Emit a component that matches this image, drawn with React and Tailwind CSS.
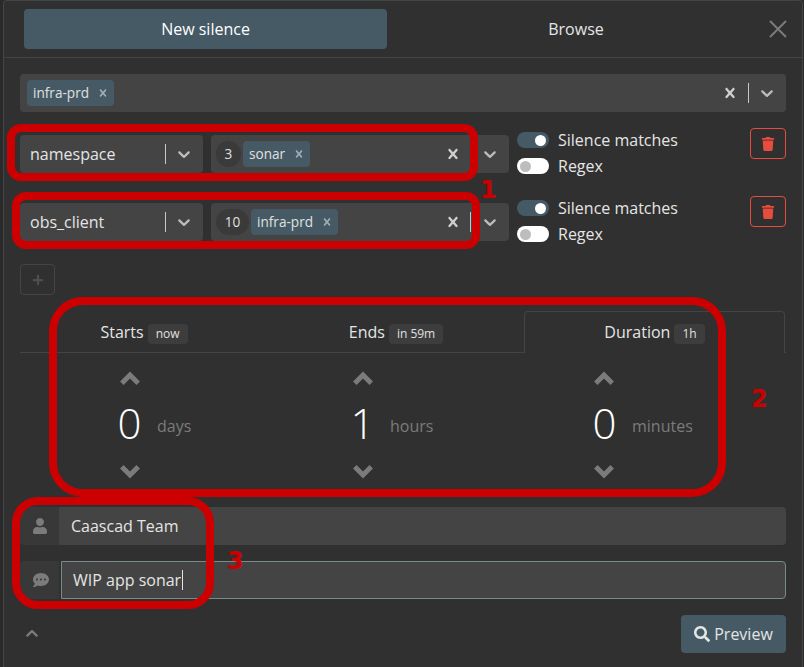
import { FaCommentDots, FaPlus, FaSearch, FaTrash, FaUser } from 'react-icons/fa';

// react-select's own indicator glyphs
const Chevron = ({ className = '' }) => (
  <svg viewBox="0 0 20 20" width="20" height="20" fill="currentColor" className={className}>
    <path d="M4.516 7.548c0.436-0.446 1.043-0.481 1.576 0l3.908 3.747 3.908-3.747c0.533-0.481 1.141-0.446 1.574 0 0.436 0.445 0.408 1.197 0 1.615-0.406 0.418-4.695 4.502-4.695 4.502-0.217 0.223-0.502 0.335-0.787 0.335s-0.57-0.112-0.789-0.335c0 0-4.287-4.084-4.695-4.502s-0.436-1.17 0-1.615z" />
  </svg>
);

const Cross = ({ size = 20, className = '' }) => (
  <svg viewBox="0 0 20 20" width={size} height={size} fill="currentColor" className={className}>
    <path d="M14.348 14.849c-0.469 0.469-1.229 0.469-1.697 0l-2.651-3.030-2.651 3.029c-0.469 0.469-1.229 0.469-1.697 0-0.469-0.469-0.469-1.229 0-1.697l2.758-3.15-2.759-3.152c-0.469-0.469-0.469-1.228 0-1.697s1.228-0.469 1.697 0l2.652 3.031 2.651-3.031c0.469-0.469 1.228-0.469 1.697 0s0.469 1.229 0 1.697l-2.758 3.152 2.758 3.15c0.469 0.469 0.469 1.229 0 1.698z" />
  </svg>
);

// thick spinner arrows, pointing up unless flipped
const SpinArrow = ({ className = '' }) => (
  <svg viewBox="0 0 20 14" width="20" height="14" fill="none" stroke="#7b7b7b" strokeWidth="5" className={className}>
    <polyline points="1.8,12.2 10,4 18.2,12.2" />
  </svg>
);

const Tag = ({ children }) => (
  <div className="flex h-[26px] items-center rounded bg-[#455a64] pl-[6px] pr-[4px] text-[13.6px] text-[#e0e0e0]">
    {children}
    <Cross size={14} className="ml-[7px] text-[#a3adb2]" />
  </div>
);

const Toggle = ({ on, label }) => (
  <div className="flex h-[26px] items-center">
    <div className={`flex h-4 w-8 items-center rounded-full px-[3px] ${on ? 'justify-end bg-[#455a64]' : 'justify-start bg-white'}`}>
      <div className={`h-[11px] w-[11px] rounded-full ${on ? 'bg-white' : 'bg-[#bdbdbd]'}`} />
    </div>
    <span className="ml-[9px] text-[16px] text-[#e5e5e5]">{label}</span>
  </div>
);

const MatcherRow = ({ name, count, value, countWidth, caret }) => (
  <div className="flex items-start">
    <div className="mt-[7px] flex h-[38px] w-[183px] items-center rounded bg-[#444444] pl-[10px] pr-[9px]">
      <span className="flex-1 text-[16px] text-[#e5e5e5]">{name}</span>
      <div className="h-5 w-px bg-[#c8c8c8]" />
      <Chevron className="ml-[8px] text-[#bcbcbc]" />
    </div>
    <div className="ml-2 mt-[7px] flex h-[38px] w-[298px] items-center rounded bg-[#444444] pl-[5px] pr-[9px]">
      <div className={`flex h-[26px] items-center justify-center rounded-full bg-[#3a3a3a] text-[13.6px] text-[#e0e0e0] ${countWidth}`}>{count}</div>
      <div className="ml-[2px]"><Tag>{value}</Tag></div>
      <div className="flex-1" />
      <Cross className="text-[#d0d0d0]" />
      <div className={`ml-[7px] h-5 w-px ${caret ? 'bg-[#c8c8c8]' : ''}`} />
      <Chevron className="ml-[9px] text-[#bcbcbc]" />
    </div>
    <div className="-mt-px ml-2 flex flex-col">
      <Toggle on label="Silence matches" />
      <Toggle label="Regex" />
    </div>
    <div className="flex-1" />
    <div className="flex h-[31px] w-9 items-center justify-center rounded border border-[#e74c3c] text-[#e74c3c]">
      <FaTrash size={14} />
    </div>
  </div>
);

const Spinner = ({ value, unit, arrowClass = '' }) => (
  <div className="flex flex-col">
    <SpinArrow className={arrowClass} />
    <div className="mt-4 flex h-[44px] items-center">
      <span className="flex w-[21px] justify-center text-[42px] font-light leading-none text-white">{value}</span>
      <span className="ml-[17px] mt-[6px] text-[16px] text-[#7b7b7b]">{unit}</span>
    </div>
    <SpinArrow className={`mt-5 rotate-180 ${arrowClass}`} />
  </div>
);

const Badge = ({ children }) => (
  <span className="ml-[4px] mt-1 flex h-5 items-center rounded bg-[#3d3d3d] px-[8px] text-[12px] text-[#e0e0e0]">{children}</span>
);

const TimeTab = ({ label, badge, active, className }) => (
  <div className={`flex h-[42px] items-center justify-center pb-[2px] text-[16px] text-[#e5e5e5] ${active ? 'rounded-t border border-b-0 border-[#444444]' : 'border-b border-[#444444] pr-[4px] pt-[2px]'} ${className}`}>
    {label}
    <Badge>{badge}</Badge>
  </div>
);

const InputRow = ({ icon, children, focused }) => (
  <div className="flex h-[38px]">
    <div className="flex w-[39px] shrink-0 items-center justify-center rounded-l bg-[#383838] text-[#7b7b7b]">{icon}</div>
    <div className={`flex flex-1 items-center rounded-r bg-[#444444] text-[16px] text-[#e5e5e5] ${focused ? 'ml-[2px] border border-[#7b8a8b] pl-[11px]' : 'pl-3'}`}>
      {children}
    </div>
  </div>
);

export default function App() {
  return (
    <div className="relative h-[667px] w-[804px] overflow-hidden bg-[#2a2a2a] font-['Open_Sans',sans-serif]">
      {/* Modal */}
      <div className="ml-[3px] mr-px h-[667px] rounded-t border border-b-0 border-[#444444] bg-[#303030]">
        {/* Tabs */}
        <div className="flex h-[57px] border-b border-[#444444] pl-5 pt-2">
          <div className="flex h-10 w-[363px] items-center justify-center rounded bg-[#455a64] text-[16px] text-white">New silence</div>
          <div className="flex h-10 w-[378px] items-center justify-center text-[16px] text-[#e5e5e5]">Browse</div>
          <svg viewBox="0 0 18 18" width="18" height="18" className="ml-[4px] mt-[11px] text-[#7b7b7b]" stroke="currentColor" strokeWidth="2">
            <path d="M1 1 17 17M17 1 1 17" />
          </svg>
        </div>

        <div className="px-4 pt-4">
          {/* Cluster select */}
          <div className="flex h-[38px] items-center rounded bg-[#444444] pl-[7px] pr-[9px]">
            <Tag>infra-prd</Tag>
            <div className="flex-1" />
            <Cross className="text-[#d0d0d0]" />
            <div className="ml-[8px] h-5 w-px bg-[#c8c8c8]" />
            <Chevron className="ml-[8px] text-[#bcbcbc]" />
          </div>

          {/* Matchers */}
          <div className="mt-4 flex flex-col gap-[17px]">
            <MatcherRow name="namespace" count="3" value="sonar" countWidth="w-[25px]" />
            <MatcherRow name="obs_client" count="10" value="infra-prd" countWidth="w-[33px]" caret />
          </div>

          <div className="mt-[17px] flex h-[31px] w-[35px] items-center justify-center rounded border border-[#444444] text-[#4e4e4e]">
            <FaPlus size={12} />
          </div>

          {/* Schedule tabs */}
          <div className="mt-4 flex">
            <TimeTab label="Starts" badge="now" className="w-[252px]" />
            <TimeTab label="Ends" badge="in 59m" className="w-[252px]" />
            <TimeTab label="Duration" badge="1h" active className="w-[261px]" />
            <div className="w-px border-b border-[#444444]" />
          </div>
          <div className="grid grid-cols-[233px_242px_1fr] pl-[99px] pt-[18px]">
            <Spinner value="0" unit="days" arrowClass="ml-px" />
            <Spinner value="1" unit="hours" arrowClass="ml-px" />
            <Spinner value="0" unit="minutes" />
          </div>

          {/* Author and comment */}
          <div className="mt-7 flex flex-col gap-4">
            <InputRow icon={<FaUser size={16} />}>Caascad Team</InputRow>
            <InputRow icon={<FaCommentDots size={16} className="ml-[2px]" />} focused>
              WIP app sonar<span className="ml-px h-5 w-px bg-[#e5e5e5]" />
            </InputRow>
          </div>

          {/* Footer */}
          <div className="mt-4 flex items-center justify-between">
            <Chevron className="ml-[2px] rotate-180 text-[#7b7b7b]" />
            <div className="flex h-[38px] w-[105px] items-center justify-center rounded bg-[#455a64] text-[16px] text-[#e5e5e5]">
              <FaSearch size={16} className="mr-[4px]" />Preview
            </div>
          </div>
        </div>
      </div>

      {/* Red annotations drawn over the screenshot */}
      <div className="absolute left-[7px] top-[124px] h-[57px] w-[471px] rounded-[14px] border-[8px] border-[#cc0000]" />
      <div className="absolute left-[12px] top-[192px] h-[57px] w-[468px] rounded-[14px] border-[8px] border-[#cc0000]" />
      <div className="absolute left-[49px] top-[297px] h-[200px] w-[677px] rounded-[34px] border-[8px] border-[#cc0000]" />
      <div className="absolute left-[12px] top-[497px] h-[112px] w-[202px] rounded-[26px] border-[8px] border-[#cc0000]" />
      <span className="absolute left-[480px] top-[178px] font-['DejaVu_Sans',sans-serif] text-[24px] font-bold leading-none text-[#cc0000]">1</span>
      <span className="absolute left-[751px] top-[387px] font-['DejaVu_Sans',sans-serif] text-[24px] font-bold leading-none text-[#cc0000]">2</span>
      <span className="absolute left-[227px] top-[549px] font-['DejaVu_Sans',sans-serif] text-[24px] font-bold leading-none text-[#cc0000]">3</span>
    </div>
  );
}
